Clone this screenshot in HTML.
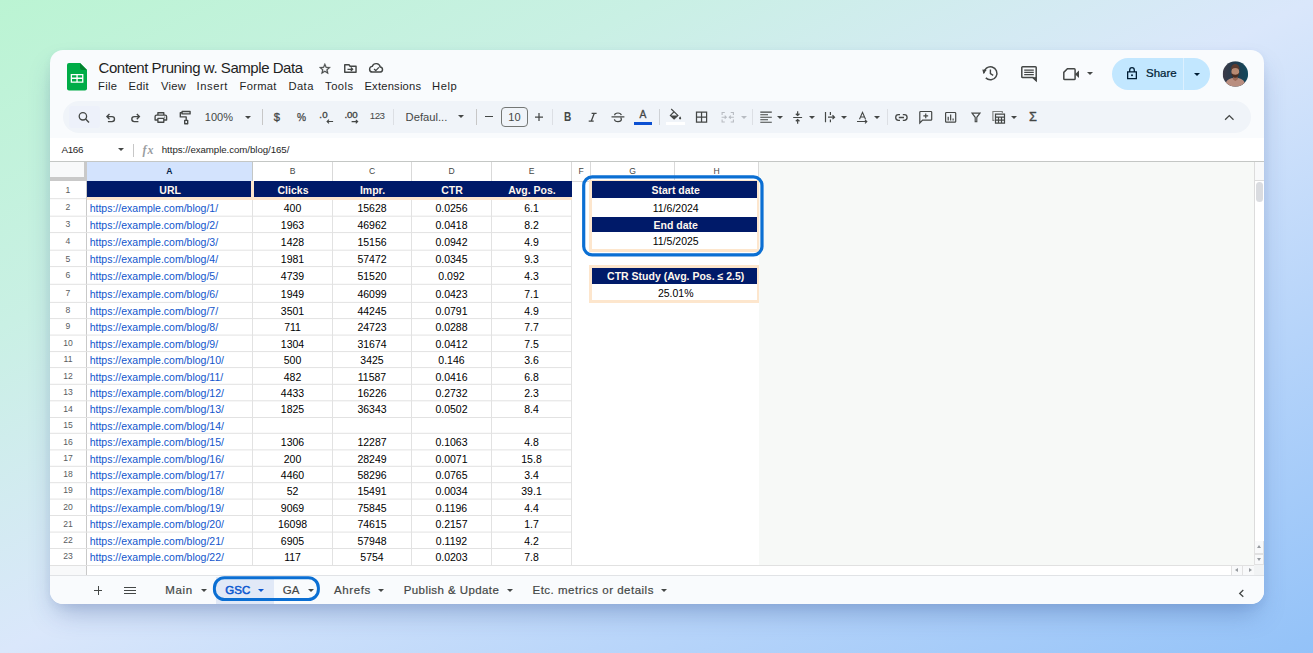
<!DOCTYPE html>
<html lang="en">
<head>
<meta charset="utf-8">
<title>Content Pruning w. Sample Data</title>
<style>
*{box-sizing:border-box;margin:0;padding:0}
html,body{width:1313px;height:653px;overflow:hidden}
body{position:relative;font-family:"Liberation Sans",sans-serif;color:#1f1f1f;
 background:linear-gradient(to bottom right,#bbf4d3 0%,#c9f0e4 25%,#dae7fb 50%,#b6d4fa 75%,#93c2f8 100%);}
.abs,#card>*,#card div,#card svg,#card span{position:absolute}
#card{position:absolute;left:50px;top:50px;width:1213.600px;height:553.700px;border-radius:13px;background:#f9fbfd;
 box-shadow:0 14px 26px -6px rgba(45,75,140,.34),0 3px 8px rgba(45,75,140,.06);overflow:hidden}
svg{display:block;overflow:visible}
.ic{fill:#444746}
.st{fill:none;stroke:#444746;stroke-width:1.3;stroke-linecap:butt;stroke-linejoin:miter}
#title{left:48.5px;top:8px;font-size:15px;line-height:20px;white-space:nowrap;color:#1f1f1f;letter-spacing:-.45px}
.menu{top:28.800px;font-size:11.200px;letter-spacing:.3px;line-height:14px;white-space:nowrap;color:#1f1f1f}
#toolbar{left:13px;top:51px;width:1188px;height:32px;border-radius:16px;background:#f0f4f9}
#srch{left:19px;top:56px;width:31px;height:22px;border-radius:3px;background:#edf1fa}
.tb{font-size:11px;line-height:14px;white-space:nowrap;color:#444746}
.sep{width:1px;top:59px;height:16px;background:#c7c7c7}
.sepl{width:1px;top:59px;height:16px;background:#dcdfe4}
.dd{width:0;height:0;border-left:3.1px solid transparent;border-right:3.1px solid transparent;border-top:3.3px solid #444746}
#fbar{left:0;top:88px;width:1214px;height:24px;background:#fff}
#grid{left:0;top:111px;width:1214px;height:415px;background:#fff}
#grey{left:709px;top:112px;width:495px;height:404px;background:#f7f9f7}
.hl{height:1px;background:#e1e1e1}
.vl{width:1px;background:#e1e1e1}
.rn{left:0;width:36px;height:16px;line-height:14px;font-size:8.6px;text-align:center;color:#5a5d60}
.url{left:39.7px;height:16px;line-height:16px;font-size:10.5px;color:#1155cc;white-space:nowrap}
.num{height:16px;line-height:16px;font-size:10.5px;text-align:center;color:#000;white-space:nowrap}
.ch{top:112px;height:19px;line-height:19px;font-size:8.6px;text-align:center;color:#444746;border-right:1px solid #d9d9d9;background:#fff}
.nv{background:#001a69;color:#fff7ee;font-weight:bold;font-size:10.5px;text-align:center;white-space:nowrap}
.pe{background:#fde6cd}
.tab{top:532.7px;-webkit-text-stroke:.2px #444746;font-size:11.5px;line-height:14px;white-space:nowrap;color:#444746;letter-spacing:.1px}
#tabs{left:0;top:525px;width:1214px;height:30px;background:#f9fbfd;border-top:1px solid #e1e3e6}
</style>
</head>
<body>
<div id="card">
<!-- ===== header ===== -->
<svg style="left:17px;top:12.800px" width="20" height="27.500" viewBox="0 0 20 27.5">
  <path d="M2 0H13L20 7V25.5a2 2 0 0 1-2 2H2a2 2 0 0 1-2-2V2a2 2 0 0 1 2-2z" fill="#00ac47"/>
  <path d="M13 0L20 7H15a2 2 0 0 1-2-2z" fill="#00832d"/>
  <path d="M3.7 10.9h12.7v8.8H3.7zM5 12.2v2.4h4.4v-2.4zM10.7 12.2v2.4h4.4v-2.4zM5 15.9v2.5h4.4v-2.5zM10.7 15.9v2.5h4.4v-2.5z" fill="#fff" fill-rule="evenodd"/>
</svg>
<div id="title">Content Pruning w. Sample Data</div>
<svg style="left:267.900px;top:12.300px" width="13.700" height="13.700" viewBox="0 0 24 24"><path class="ic" stroke="#444746" stroke-width=".55" d="M22 9.24l-7.190-.62L12 2 9.190 8.630 2 9.240l5.460 4.730L5.820 21 12 17.270 18.180 21l-1.630-7.030L22 9.240zM12 15.400l-3.760 2.270 1-4.280-3.320-2.880 4.380-.38L12 6.100l1.710 4.040 4.380.38-3.320 2.880 1 4.280L12 15.400z"/></svg>
<svg style="left:294px;top:14px" width="12.800" height="9.200" viewBox="0 0 12.800 9.200"><path class="st" style="stroke-width:1.450;stroke-linejoin:round" d="M.75 1.300V8.300H12.050V2.200H6.100L5 .75H.75z"/><path class="st" style="stroke-width:1.250" d="M3.500 5.300H8.500M6.800 3.500L8.700 5.300L6.800 7.100"/></svg>
<svg style="left:318.800px;top:13.300px" width="14.600" height="9.800" viewBox="0 0 14.600 9.800"><path class="st" style="stroke-width:1.450" d="M3.600 9.050a2.850 2.850 0 0 1-.3-5.700A4.100 4.100 0 0 1 11.200 4a2.550 2.550 0 0 1 .2 5.050z"/><path class="st" style="stroke-width:1.350" d="M5.100 5.900l1.700 1.700L9.900 4.400"/></svg>
<div class="menu" style="left:48px">File</div>
<div class="menu" style="left:78.400px">Edit</div>
<div class="menu" style="left:111px">View</div>
<div class="menu" style="left:146.600px;letter-spacing:.55px">Insert</div>
<div class="menu" style="left:189.500px">Format</div>
<div class="menu" style="left:238.400px;letter-spacing:.45px">Data</div>
<div class="menu" style="left:275.100px;letter-spacing:.45px">Tools</div>
<div class="menu" style="left:314.400px;letter-spacing:.22px">Extensions</div>
<div class="menu" style="left:382px;letter-spacing:.6px">Help</div>
<!-- history -->
<svg style="left:931.5px;top:15.3px" width="16.5" height="16.5" viewBox="0 0 16.5 16.5"><path class="st" style="stroke-width:1.5" d="M1.9 8.3a6.5 6.5 0 1 1 1.9 4.6"/><path class="ic" d="M.3 4.6l4.3.3L1.5 9z"/><path class="st" style="stroke-width:1.4" d="M8.4 4.6V8.6L11.2 10.4"/></svg>
<!-- comment -->
<svg style="left:971px;top:15.8px" width="16" height="16" viewBox="0 0 16 16"><path class="st" style="stroke-width:1.5" d="M.8 1.6a.8.8 0 0 1 .8-.8H14.4a.8.8 0 0 1 .8.8V14.6L12 11.6H1.6a.8.8 0 0 1-.8-.8z"/><path class="ic" d="M15.2 11v4.6l-4-4z"/><path class="st" style="stroke-width:1.250" d="M3.2 4.1H12.8M3.2 6.300H12.8M3.2 8.500H12.8"/></svg>
<!-- video -->
<svg style="left:1013px;top:18px" width="16.4" height="12.4" viewBox="0 0 16.4 12.4"><path class="st" style="stroke-width:1.5" d="M.8 4.4L4.4.8H11.2a.9.9 0 0 1 .9.9V10.7a.9.9 0 0 1-.9.9H1.7a.9.9 0 0 1-.9-.9z"/><path class="ic" d="M12 6.2L16 2.4V10z"/></svg>
<div class="dd" style="left:1037.3px;top:22.3px"></div>
<!-- share -->
<div style="left:1062px;top:8px;width:98px;height:31.6px;border-radius:16px;background:#c2e7ff"></div>
<div style="left:1133.2px;top:8px;width:1px;height:31.6px;background:#dcf0ff"></div>
<svg style="left:1077px;top:17px" width="10" height="12.2" viewBox="0 0 10 12.2"><path class="st" style="stroke:#001d35;stroke-width:1.3" d="M.65 4.85h8.7v6.7H.65zM2.7 4.8V3a2.3 2.3 0 0 1 4.6 0v1.8"/><circle cx="5" cy="8.2" r="1" fill="#001d35"/></svg>
<div style="left:1096px;top:16.2px;font-size:11.500px;line-height:14px;-webkit-text-stroke:.22px #001d35;color:#001d35;letter-spacing:-.02px;white-space:nowrap">Share</div>
<div class="dd" style="left:1143.6px;top:22.6px;border-top-color:#001d35"></div>
<!-- avatar -->
<svg style="left:1172.500px;top:11px" width="25.600" height="25.600" viewBox="0.400 -0.150 25.600 25.600">
  <defs><clipPath id="av"><circle cx="12.800" cy="12.800" r="12.700"/></clipPath>
  <linearGradient id="avg" x1="0" x2="1" y1="0" y2="0"><stop offset="0" stop-color="#3d3b48"/><stop offset=".45" stop-color="#243a4c"/><stop offset="1" stop-color="#12495e"/></linearGradient></defs>
  <g clip-path="url(#av)">
    <rect width="25.600" height="25.600" fill="url(#avg)"/>
    <path d="M2.300 25.600c.3-5.600 3.400-8 7.200-8.800l3.200 1.400 3.200-1.400c3.800.8 6.900 3.200 7.200 8.800z" fill="#b98e80"/>
    <path d="M10.500 14.300h4.500v4.100l-2.250 1.500-2.250-1.500z" fill="#9b6956"/>
    <ellipse cx="12.700" cy="10.500" rx="3.900" ry="4.900" fill="#b98a72"/>
    <path d="M8.500 9.300c-.5-4 1.500-6.500 4.200-6.500s4.700 2.500 4.200 6.500c-.6-1.600-1.800-2.500-4.200-2.500s-3.600.9-4.200 2.500z" fill="#5c3b2f"/>
    <path d="M8.800 11.400c.2 3.500 1.800 5.200 3.900 5.200s3.700-1.700 3.900-5.200c-.8 1.600-2.100 2.200-3.900 2.200s-3.100-.6-3.900-2.200z" fill="#4a2d22"/>
  </g>
</svg>
<!-- ===== toolbar ===== -->
<div id="toolbar"></div>
<div id="srch"></div>
<div class="tb" style="left:154.8px;top:60.2px">100%</div>
<div class="dd" style="left:194.8px;top:65.8px"></div>
<div class="sep" style="left:211.5px"></div>
<div class="tb" style="left:223.700px;top:59.800px;font-size:11.200px;-webkit-text-stroke:.3px #444746">$</div>
<div class="tb" style="left:246.900px;top:61px;font-size:10.200px;-webkit-text-stroke:.25px #444746">%</div>
<div class="tb" style="left:269.300px;top:58.200px;font-size:9.700px;-webkit-text-stroke:.35px #444746;letter-spacing:.2px">.0</div>
<div class="tb" style="left:294.400px;top:58.200px;font-size:9.700px;-webkit-text-stroke:.35px #444746;letter-spacing:-.1px">.00</div>
<div class="tb" style="left:319.800px;top:59.400px;font-size:9.800px;letter-spacing:-.55px">123</div>
<div class="sepl" style="left:342.6px"></div>
<div class="tb" style="left:355.6px;top:60.2px;font-size:11.2px">Defaul...</div>
<div class="dd" style="left:407.9px;top:65.3px"></div>
<div class="sep" style="left:426.4px"></div>
<div style="left:434.8px;top:66.1px;width:8.2px;height:1.3px;background:#444746"></div>
<div style="left:451px;top:57px;width:26.8px;height:19.5px;border:1px solid #747775;border-radius:4px"></div>
<div class="tb" style="left:451px;top:59.8px;width:26.8px;text-align:center;font-size:11px">10</div>
<div class="sepl" style="left:502.4px"></div>
<div class="tb" style="left:513.800px;top:59.900px;font-size:12.300px;font-weight:bold;transform-origin:0 0;transform:scaleX(.82)">B</div>
<div class="tb" style="left:589.500px;top:58.300px;font-size:10.300px;-webkit-text-stroke:.3px #444746">A</div>
<div style="left:584px;top:71.9px;width:18.3px;height:3.1px;background:#0c50d2"></div>
<div style="left:616.2px;top:71.9px;width:18.7px;height:3.1px;background:#fff"></div>
<div class="sepl" style="left:609.4px;background:#cfd2d6"></div>
<div class="sepl" style="left:702.2px"></div>
<div class="dd" style="left:691.4px;top:65.7px;border-top-color:#b8bcc2"></div>
<div class="dd" style="left:727px;top:65.6px"></div>
<div class="dd" style="left:759.3px;top:65.6px"></div>
<div class="dd" style="left:791.4px;top:65.6px"></div>
<div class="dd" style="left:823.6px;top:65.6px"></div>
<div class="sepl" style="left:836.6px"></div>
<div class="dd" style="left:960.6px;top:65.6px"></div>
<div class="tb" style="left:978.800px;top:60.400px;font-size:13.400px;-webkit-text-stroke:.35px #444746;transform-origin:0 0;transform:scaleX(.95)">Σ</div>
<svg style="left:0;top:50px" width="1213" height="40" viewBox="50 100 1213 40">
 <!-- plus -->
 <path class="st" style="stroke-width:1.250" d="M535 117H543M539 113V121"/>
 <!-- search -->
 <circle class="st" style="stroke-width:1.300" cx="82.900" cy="116.300" r="3.700"/><path class="st" style="stroke-width:1.450" d="M85.600 119L89 122.400"/>
 <!-- undo / redo -->
 <path class="st" style="stroke-width:1.350" d="M107 116.600H112A2.500 2.500 0 0 1 112 121.600H107.900M109.500 114L106.900 116.600L109.500 119.200"/>
 <path class="st" style="stroke-width:1.350" d="M139.300 116.600H134.300A2.500 2.500 0 0 0 134.300 121.600H138.400M136.800 114L139.400 116.600L136.800 119.200"/>
 <!-- print -->
 <path class="st" style="stroke-width:1.350;stroke-linejoin:round" d="M157.900 115V112.700H163.800V115M157.600 120H155.100V116.600a1.500 1.500 0 0 1 1.500-1.500H165.100a1.500 1.500 0 0 1 1.500 1.500V120H164.100M157.900 118.400H163.800V122.200H157.900z"/>
 <circle class="ic" cx="164.600" cy="117.100" r=".6"/>
 <!-- paint format -->
 <path class="st" style="stroke-width:1.350;stroke-linejoin:round" d="M182.100 111.500h8v2.400h-8zM182 112.700H180.300V116.900H186.200V120M184.700 120.300h3v3.400h-3z"/>
 <!-- decimal arrows -->
 <path class="st" style="stroke-width:1.1" d="M333.100 121.500H327.200M329 119.700L327.100 121.500L329 123.300"/>
 <path class="st" style="stroke-width:1.1" d="M351.600 121.600H357.600M355.800 119.800L357.700 121.600L355.800 123.400"/>
 <!-- italic -->
 <path class="st" style="stroke-width:1.3" d="M591.600 113.400H596.600M588.700 121.200H593.700M594.200 113.400L591.200 121.200"/>
 <!-- strikethrough -->
 <path class="st" style="stroke-width:1.2" d="M611.500 116.800H624.400M621.300 115.100C621 113.600 619.600 113 618 113C616 113 614.600 113.800 614.600 115.200M614.400 119.200C614.600 120.800 616 121.600 618 121.600C620 121.600 621.400 120.700 621.400 119.300C621.400 118.600 621.100 118.200 620.600 117.800"/>
 <!-- fill -->
 <path class="st" style="stroke-width:1.2" d="M671.200 109L677.900 115.400L674.100 119L670.400 115.400L674.100 111.800"/>
 <path class="ic" d="M670.700 115.400H677.700L674.100 118.800z"/>
 <path class="ic" d="M680.100 116.300c.7.900 1.100 1.500 1.100 2a1.100 1.100 0 0 1-2.200 0c0-.5.400-1.100 1.100-2z"/>
 <!-- borders -->
 <path class="st" style="stroke-width:1.25" d="M696.500 112.200h10.100v10H696.500zM701.550 112.200v10M696.500 117.200h10.100"/>
 <!-- merge (disabled) -->
 <path class="st" style="stroke:#b8bcc2;stroke-width:1.1" d="M724.800 112.500H722.100V115M730.700 112.500H733.400V115M724.800 122H722.100V119.500M730.700 122H733.400V119.500M721.600 117.200H726.200M724.700 115.700L726.300 117.200L724.700 118.700M733.900 117.200H729.300M730.800 115.700L729.200 117.200L730.800 118.700"/>
 <!-- align -->
 <path class="st" style="stroke-width:1.2" d="M760.300 112.200H771.800M760.300 114.750H768M760.300 117.250H771.800M760.300 119.750H768M760.300 122.250H771.800"/>
 <!-- valign -->
 <path class="st" style="stroke-width:1.2" d="M793.200 117.500H802.100M797.650 111.200V115.400M795.800 113.700L797.650 115.500L799.500 113.700M797.650 123.800V119.600M795.800 121.300L797.650 119.500L799.500 121.300"/>
 <!-- wrap -->
 <path class="st" style="stroke-width:1.2" d="M825.500 112.100V122.200M830.400 112.100V115M830.400 119.400V122.200M828 117.200H834.400M832.500 115.300L834.500 117.200L832.500 119.100"/>
 <!-- rotate -->
 <path class="st" style="stroke-width:1.1" d="M859.500 119.200L862.500 112.400L865.500 119.200M860.500 117H864.500M857 121.500H866.600M865 119.900L866.800 121.600L865 123.300"/>
 <!-- link -->
 <path class="st" style="stroke-width:1.280" d="M900 114.700H898.500A2.800 2.800 0 0 0 898.500 120.300H900M902.800 114.700H904.300A2.800 2.800 0 0 1 904.300 120.300H902.800M898.800 117.500H904"/>
 <!-- add comment -->
 <path class="st" style="stroke-width:1.2" d="M919.800 123V112.300a.8.800 0 0 1 .8-.8H930.900a.8.800 0 0 1 .8.800V119.400a.8.800 0 0 1-.8.800H922.600z"/>
 <path class="st" style="stroke-width:1.2" d="M925.750 113.500V118.300M923.350 115.900H928.150"/>
 <!-- chart -->
 <path class="st" style="stroke-width:1.2" d="M946.400 112.500H954.900a.8.800 0 0 1 .8.800V121.400a.8.800 0 0 1-.8.800H946.400a.8.800 0 0 1-.8-.8V113.300a.8.800 0 0 1 .8-.8zM948.200 120.500V116.800M950.650 120.500V114.400M953.100 120.500V118.600"/>
 <!-- filter -->
 <path class="st" style="stroke-width:1.150" d="M972 113.100H980L976.800 117.300V121.700H975.200V117.300z"/>
 <!-- filter views -->
 <path class="st" style="stroke-width:1.1;stroke:#7b7e7d" d="M994.400 120.400H992.900V111.500H1002.300V113"/>
 <path class="st" style="stroke-width:1.2" d="M995.500 114.100H1004.500V123.200H995.500zM995.500 117.200H1004.500M995.500 120.200H1004.500M998.500 117.200V123.200M1001.500 117.200V123.200"/>
 <!-- collapse caret -->
 <path class="st" style="stroke-width:1.300" d="M1225.100 119.800L1229.300 115.600L1233.500 119.800"/>
</svg>
<!-- ===== formula bar ===== -->
<div id="fbar"></div>
<div style="left:11.400px;top:93px;font-size:9.900px;line-height:14px;letter-spacing:-.35px;color:#1f1f1f;white-space:nowrap">A166</div>
<div class="dd" style="left:67.900px;top:98.300px;border-left-width:3.300px;border-right-width:3.300px;border-top-width:3.800px"></div>
<div style="left:83px;top:94.300px;width:1px;height:12.500px;background:#c7c7c7"></div>
<div style="left:92.500px;top:92px;font-family:'Liberation Serif',serif;font-style:italic;font-weight:bold;font-size:12px;line-height:16px;color:#9a9da1;letter-spacing:.9px;white-space:nowrap">fx</div>
<div style="left:111.800px;top:93.400px;font-size:9.700px;line-height:14px;color:#1f1f1f;white-space:nowrap;letter-spacing:-.06px">https://example.com/blog/165/</div>
<!-- ===== grid ===== -->
<div id="grid"></div>
<div id="grey"></div>
<div style="left:0;top:111px;width:1214px;height:1px;background:#c4c7c5"></div>
<!-- corner -->
<div style="left:0;top:112px;width:36.600px;height:19px;background:#c9c9c9"></div>
<div style="left:0;top:112px;width:33.600px;height:15px;background:#f8f9fa"></div>
<!-- column headers -->
<div class="ch" style="left:36.600px;width:166.400px;background:#d3e3fd;color:#041e49;font-weight:bold;border-right-color:#c4c7c5">A</div>
<div class="ch" style="left:203px;width:80px">B</div>
<div class="ch" style="left:283px;width:79px">C</div>
<div class="ch" style="left:362px;width:80px">D</div>
<div class="ch" style="left:442px;width:80px">E</div>
<div class="ch" style="left:522px;width:19px">F</div>
<div class="ch" style="left:541px;width:84px">G</div>
<div class="ch" style="left:625px;width:84px">H</div>
<div style="left:36.600px;top:131px;width:672px;height:1px;background:#d9d9d9"></div>
<!-- row header right border -->
<div style="left:36px;top:131px;width:1px;height:395px;background:#c9c9c9"></div>
<!-- row 1 -->
<div class="pe" style="left:37px;top:131px;width:485px;height:19px"></div>
<div class="nv" style="left:37px;top:131px;width:164px;height:16px;line-height:18.500px;padding-left:2.200px">URL</div>
<div class="nv" style="left:203.600px;top:131px;width:318.400px;height:16px"></div>
<div class="nv" style="left:203px;top:131px;width:80px;height:16px;line-height:18.500px;background:none">Clicks</div>
<div class="nv" style="left:283px;top:131px;width:79px;height:16px;line-height:18.500px;background:none">Impr.</div>
<div class="nv" style="left:362px;top:131px;width:80px;height:16px;line-height:18.500px;background:none">CTR</div>
<div class="nv" style="left:442px;top:131px;width:80px;height:16px;line-height:18.500px;background:none">Avg. Pos.</div>
<svg style="left:0;top:0" width="1213" height="553" viewBox="50 50 1213 553"><path d="M50 198.7H86.5M50 216.2H571.5M50 232.6H571.5M50 250.2H571.5M50 266.6H571.5M50 284.3H571.5M50 302.4H571.5M50 318.6H571.5M50 335.1H571.5M50 351.6H571.5M50 367.6H571.5M50 384.3H571.5M50 400.8H571.5M50 417.5H571.5M50 433.3H571.5M50 449.9H571.5M50 466.3H571.5M50 482.7H571.5M50 499.1H571.5M50 515.5H571.5M50 532.1H571.5M50 548.5H571.5M50 565.5H571.5M252.5 200V565.4M332.5 200V565.4M411.5 200V565.4M491.5 200V565.4M571.5 200V565.4" fill="none" stroke="#e2e2e2" stroke-width="1"/></svg>
<div class="rn" style="top:132.65px">1</div>
<div class="rn" style="top:150.45px">2</div>
<div class="url" style="top:150.16px">https://example.com/blog/1/</div>
<div class="num" style="top:150.16px;left:202.5px;width:80.0px">400</div>
<div class="num" style="top:150.16px;left:282.5px;width:79.0px">15628</div>
<div class="num" style="top:150.16px;left:361.5px;width:80.0px">0.0256</div>
<div class="num" style="top:150.16px;left:441.5px;width:80.0px">6.1</div>
<div class="rn" style="top:167.25px">3</div>
<div class="url" style="top:166.96px">https://example.com/blog/2/</div>
<div class="num" style="top:166.96px;left:202.5px;width:80.0px">1963</div>
<div class="num" style="top:166.96px;left:282.5px;width:79.0px">46962</div>
<div class="num" style="top:166.96px;left:361.5px;width:80.0px">0.0418</div>
<div class="num" style="top:166.96px;left:441.5px;width:80.0px">8.2</div>
<div class="rn" style="top:184.45px">4</div>
<div class="url" style="top:184.16px">https://example.com/blog/3/</div>
<div class="num" style="top:184.16px;left:202.5px;width:80.0px">1428</div>
<div class="num" style="top:184.16px;left:282.5px;width:79.0px">15156</div>
<div class="num" style="top:184.16px;left:361.5px;width:80.0px">0.0942</div>
<div class="num" style="top:184.16px;left:441.5px;width:80.0px">4.9</div>
<div class="rn" style="top:201.55px">5</div>
<div class="url" style="top:201.26px">https://example.com/blog/4/</div>
<div class="num" style="top:201.26px;left:202.5px;width:80.0px">1981</div>
<div class="num" style="top:201.26px;left:282.5px;width:79.0px">57472</div>
<div class="num" style="top:201.26px;left:361.5px;width:80.0px">0.0345</div>
<div class="num" style="top:201.26px;left:441.5px;width:80.0px">9.3</div>
<div class="rn" style="top:218.45px">6</div>
<div class="url" style="top:218.16px">https://example.com/blog/5/</div>
<div class="num" style="top:218.16px;left:202.5px;width:80.0px">4739</div>
<div class="num" style="top:218.16px;left:282.5px;width:79.0px">51520</div>
<div class="num" style="top:218.16px;left:361.5px;width:80.0px">0.092</div>
<div class="num" style="top:218.16px;left:441.5px;width:80.0px">4.3</div>
<div class="rn" style="top:235.95px">7</div>
<div class="url" style="top:235.66px">https://example.com/blog/6/</div>
<div class="num" style="top:235.66px;left:202.5px;width:80.0px">1949</div>
<div class="num" style="top:235.66px;left:282.5px;width:79.0px">46099</div>
<div class="num" style="top:235.66px;left:361.5px;width:80.0px">0.0423</div>
<div class="num" style="top:235.66px;left:441.5px;width:80.0px">7.1</div>
<div class="rn" style="top:253.25px">8</div>
<div class="url" style="top:252.96px">https://example.com/blog/7/</div>
<div class="num" style="top:252.96px;left:202.5px;width:80.0px">3501</div>
<div class="num" style="top:252.96px;left:282.5px;width:79.0px">44245</div>
<div class="num" style="top:252.96px;left:361.5px;width:80.0px">0.0791</div>
<div class="num" style="top:252.96px;left:441.5px;width:80.0px">4.9</div>
<div class="rn" style="top:269.45px">9</div>
<div class="url" style="top:269.16px">https://example.com/blog/8/</div>
<div class="num" style="top:269.16px;left:202.5px;width:80.0px">711</div>
<div class="num" style="top:269.16px;left:282.5px;width:79.0px">24723</div>
<div class="num" style="top:269.16px;left:361.5px;width:80.0px">0.0288</div>
<div class="num" style="top:269.16px;left:441.5px;width:80.0px">7.7</div>
<div class="rn" style="top:286.05px">10</div>
<div class="url" style="top:285.76px">https://example.com/blog/9/</div>
<div class="num" style="top:285.76px;left:202.5px;width:80.0px">1304</div>
<div class="num" style="top:285.76px;left:282.5px;width:79.0px">31674</div>
<div class="num" style="top:285.76px;left:361.5px;width:80.0px">0.0412</div>
<div class="num" style="top:285.76px;left:441.5px;width:80.0px">7.5</div>
<div class="rn" style="top:302.45px">11</div>
<div class="url" style="top:302.16px">https://example.com/blog/10/</div>
<div class="num" style="top:302.16px;left:202.5px;width:80.0px">500</div>
<div class="num" style="top:302.16px;left:282.5px;width:79.0px">3425</div>
<div class="num" style="top:302.16px;left:361.5px;width:80.0px">0.146</div>
<div class="num" style="top:302.16px;left:441.5px;width:80.0px">3.6</div>
<div class="rn" style="top:318.85px">12</div>
<div class="url" style="top:318.56px">https://example.com/blog/11/</div>
<div class="num" style="top:318.56px;left:202.5px;width:80.0px">482</div>
<div class="num" style="top:318.56px;left:282.5px;width:79.0px">11587</div>
<div class="num" style="top:318.56px;left:361.5px;width:80.0px">0.0416</div>
<div class="num" style="top:318.56px;left:441.5px;width:80.0px">6.8</div>
<div class="rn" style="top:335.25px">13</div>
<div class="url" style="top:334.96px">https://example.com/blog/12/</div>
<div class="num" style="top:334.96px;left:202.5px;width:80.0px">4433</div>
<div class="num" style="top:334.96px;left:282.5px;width:79.0px">16226</div>
<div class="num" style="top:334.96px;left:361.5px;width:80.0px">0.2732</div>
<div class="num" style="top:334.96px;left:441.5px;width:80.0px">2.3</div>
<div class="rn" style="top:351.65px">14</div>
<div class="url" style="top:351.36px">https://example.com/blog/13/</div>
<div class="num" style="top:351.36px;left:202.5px;width:80.0px">1825</div>
<div class="num" style="top:351.36px;left:282.5px;width:79.0px">36343</div>
<div class="num" style="top:351.36px;left:361.5px;width:80.0px">0.0502</div>
<div class="num" style="top:351.36px;left:441.5px;width:80.0px">8.4</div>
<div class="rn" style="top:368.10px">15</div>
<div class="url" style="top:367.81px">https://example.com/blog/14/</div>
<div class="rn" style="top:384.55px">16</div>
<div class="url" style="top:384.26px">https://example.com/blog/15/</div>
<div class="num" style="top:384.26px;left:202.5px;width:80.0px">1306</div>
<div class="num" style="top:384.26px;left:282.5px;width:79.0px">12287</div>
<div class="num" style="top:384.26px;left:361.5px;width:80.0px">0.1063</div>
<div class="num" style="top:384.26px;left:441.5px;width:80.0px">4.8</div>
<div class="rn" style="top:400.85px">17</div>
<div class="url" style="top:400.56px">https://example.com/blog/16/</div>
<div class="num" style="top:400.56px;left:202.5px;width:80.0px">200</div>
<div class="num" style="top:400.56px;left:282.5px;width:79.0px">28249</div>
<div class="num" style="top:400.56px;left:361.5px;width:80.0px">0.0071</div>
<div class="num" style="top:400.56px;left:441.5px;width:80.0px">15.8</div>
<div class="rn" style="top:417.35px">18</div>
<div class="url" style="top:417.06px">https://example.com/blog/17/</div>
<div class="num" style="top:417.06px;left:202.5px;width:80.0px">4460</div>
<div class="num" style="top:417.06px;left:282.5px;width:79.0px">58296</div>
<div class="num" style="top:417.06px;left:361.5px;width:80.0px">0.0765</div>
<div class="num" style="top:417.06px;left:441.5px;width:80.0px">3.4</div>
<div class="rn" style="top:433.45px">19</div>
<div class="url" style="top:433.16px">https://example.com/blog/18/</div>
<div class="num" style="top:433.16px;left:202.5px;width:80.0px">52</div>
<div class="num" style="top:433.16px;left:282.5px;width:79.0px">15491</div>
<div class="num" style="top:433.16px;left:361.5px;width:80.0px">0.0034</div>
<div class="num" style="top:433.16px;left:441.5px;width:80.0px">39.1</div>
<div class="rn" style="top:450.25px">20</div>
<div class="url" style="top:449.96px">https://example.com/blog/19/</div>
<div class="num" style="top:449.96px;left:202.5px;width:80.0px">9069</div>
<div class="num" style="top:449.96px;left:282.5px;width:79.0px">75845</div>
<div class="num" style="top:449.96px;left:361.5px;width:80.0px">0.1196</div>
<div class="num" style="top:449.96px;left:441.5px;width:80.0px">4.4</div>
<div class="rn" style="top:466.55px">21</div>
<div class="url" style="top:466.26px">https://example.com/blog/20/</div>
<div class="num" style="top:466.26px;left:202.5px;width:80.0px">16098</div>
<div class="num" style="top:466.26px;left:282.5px;width:79.0px">74615</div>
<div class="num" style="top:466.26px;left:361.5px;width:80.0px">0.2157</div>
<div class="num" style="top:466.26px;left:441.5px;width:80.0px">1.7</div>
<div class="rn" style="top:483.15px">22</div>
<div class="url" style="top:482.86px">https://example.com/blog/21/</div>
<div class="num" style="top:482.86px;left:202.5px;width:80.0px">6905</div>
<div class="num" style="top:482.86px;left:282.5px;width:79.0px">57948</div>
<div class="num" style="top:482.86px;left:361.5px;width:80.0px">0.1192</div>
<div class="num" style="top:482.86px;left:441.5px;width:80.0px">4.2</div>
<div class="rn" style="top:499.45px">23</div>
<div class="url" style="top:499.16px">https://example.com/blog/22/</div>
<div class="num" style="top:499.16px;left:202.5px;width:80.0px">117</div>
<div class="num" style="top:499.16px;left:282.5px;width:79.0px">5754</div>
<div class="num" style="top:499.16px;left:361.5px;width:80.0px">0.0203</div>
<div class="num" style="top:499.16px;left:441.5px;width:80.0px">7.8</div>
<!-- G:H date block -->
<div class="pe" style="left:539.300px;top:129.500px;width:170.200px;height:72px"></div>
<div style="left:541.800px;top:147px;width:165.600px;height:52px;background:#fff"></div>
<div class="nv" style="padding-left:2.200px;left:541.800px;top:131px;width:165.600px;height:17px;line-height:19.400px">Start date</div>
<div class="num" style="padding-left:2.200px;left:541.800px;top:150px;width:165.600px">11/6/2024</div>
<div class="nv" style="padding-left:2.200px;left:541.800px;top:167px;width:165.600px;height:15.400px;line-height:17.400px">End date</div>
<div class="num" style="padding-left:2.200px;left:541.800px;top:183.400px;width:165.600px">11/5/2025</div>
<!-- CTR study block -->
<div class="pe" style="left:539.300px;top:215.200px;width:170.200px;height:37.700px"></div>
<div style="left:541.800px;top:233px;width:165.600px;height:17.400px;background:#fff"></div>
<div class="nv" style="padding-left:2.200px;left:541.800px;top:218.200px;width:165.600px;height:15.800px;line-height:16px">CTR Study (Avg. Pos. ≤ 2.5)</div>
<div class="num" style="padding-left:2.200px;left:541.800px;top:234.500px;width:165.600px">25.01%</div>
<!-- annotation ring around dates -->
<svg style="left:0;top:0" width="1213" height="553" viewBox="50 50 1213 553"><rect x="583.700" y="176.900" width="178.300" height="78" rx="8.500" fill="none" stroke="#0b6fd3" stroke-width="3.200"/></svg>
<!-- scrollbars -->
<div style="left:1204px;top:112px;width:10px;height:404px;background:#fff;border-left:1px solid #dcdcdc"></div>
<div style="left:1205px;top:112px;width:9px;height:18.500px;background:#f8f9fa;border-bottom:1px solid #dcdcdc"></div>
<div style="left:1206px;top:131.500px;width:7px;height:20.300px;background:#dadce0;border-radius:3.500px"></div>
<div style="left:1204px;top:490.700px;width:10px;height:13px;border:1px solid #e1e1e1;border-top:none;background:#f8f9fa"></div>
<div style="left:1204px;top:503.500px;width:10px;height:11.500px;border:1px solid #e1e1e1;background:#f8f9fa"></div>
<div style="left:1206.500px;top:495.200px;width:0;height:0;border-left:2.700px solid transparent;border-right:2.700px solid transparent;border-bottom:3px solid #969a9f"></div>
<div style="left:1206.500px;top:508.300px;width:0;height:0;border-left:2.700px solid transparent;border-right:2.700px solid transparent;border-top:3px solid #969a9f"></div>
<div style="left:0;top:515px;width:1214px;height:11px;background:#fff;border-top:1px solid #e1e1e1"></div>
<div style="left:0;top:516px;width:36px;height:9.500px;background:#f8f9fa"></div>
<div style="left:36px;top:516px;width:1px;height:9.500px;background:#c9c9c9"></div>
<div style="left:1181.400px;top:515px;width:12px;height:10.500px;border:1px solid #e1e1e1;background:#f8f9fa"></div>
<div style="left:1193.400px;top:515px;width:11.600px;height:10.500px;border:1px solid #e1e1e1;border-left:none;background:#f8f9fa"></div>
<div style="left:1204px;top:515px;width:10px;height:10.500px;background:#f1f3f4"></div>
<div style="left:1185.300px;top:517.600px;width:0;height:0;border-top:2.700px solid transparent;border-bottom:2.700px solid transparent;border-right:3px solid #969a9f"></div>
<div style="left:1198.600px;top:517.600px;width:0;height:0;border-top:2.700px solid transparent;border-bottom:2.700px solid transparent;border-left:3px solid #969a9f"></div>
<!-- ===== sheet tabs ===== -->
<div id="tabs"></div>
<div style="left:166px;top:527px;width:57.800px;height:28px;background:#e1e9f7"></div>
<div style="left:44.100px;top:539.850px;width:8.300px;height:1.300px;background:#444746"></div>
<div style="left:47.600px;top:536.350px;width:1.300px;height:8.300px;background:#444746"></div>
<div style="left:73.900px;top:536.800px;width:11.700px;height:1.500px;background:#444746"></div>
<div style="left:73.900px;top:539.800px;width:11.700px;height:1.500px;background:#444746"></div>
<div style="left:73.900px;top:542.800px;width:11.700px;height:1.500px;background:#444746"></div>
<div class="tab" style="left:115.300px;letter-spacing:.6px">Main</div><div class="dd" style="left:150.600px;top:539.400px"></div>
<div class="tab" style="left:175.300px;color:#0b57d0;-webkit-text-stroke:.5px #0b57d0;letter-spacing:.1px">GSC</div><div class="dd" style="left:208.400px;top:539.400px;border-top-color:#0b57d0"></div>
<div class="tab" style="left:232.800px">GA</div><div class="dd" style="left:257.900px;top:539.400px"></div>
<div class="tab" style="left:284px;letter-spacing:.6px">Ahrefs</div><div class="dd" style="left:327.800px;top:539.400px"></div>
<div class="tab" style="left:353.700px;letter-spacing:.42px">Publish &amp; Update</div><div class="dd" style="left:456.600px;top:539.400px"></div>
<div class="tab" style="left:482.500px;letter-spacing:.5px">Etc. metrics or details</div><div class="dd" style="left:611.100px;top:539.400px"></div>
<svg style="left:0;top:0" width="1213" height="553" viewBox="50 50 1213 553"><rect x="214.400" y="577.700" width="104" height="21.800" rx="10" fill="none" stroke="#0b6fd3" stroke-width="3"/></svg>
<svg style="left:1187px;top:537.500px" width="9" height="11" viewBox="0 0 9 11"><path class="st" style="stroke-width:1.300" d="M6.300 2.100L2.700 5.400L6.300 8.700"/></svg>
</div>
</body>
</html>
